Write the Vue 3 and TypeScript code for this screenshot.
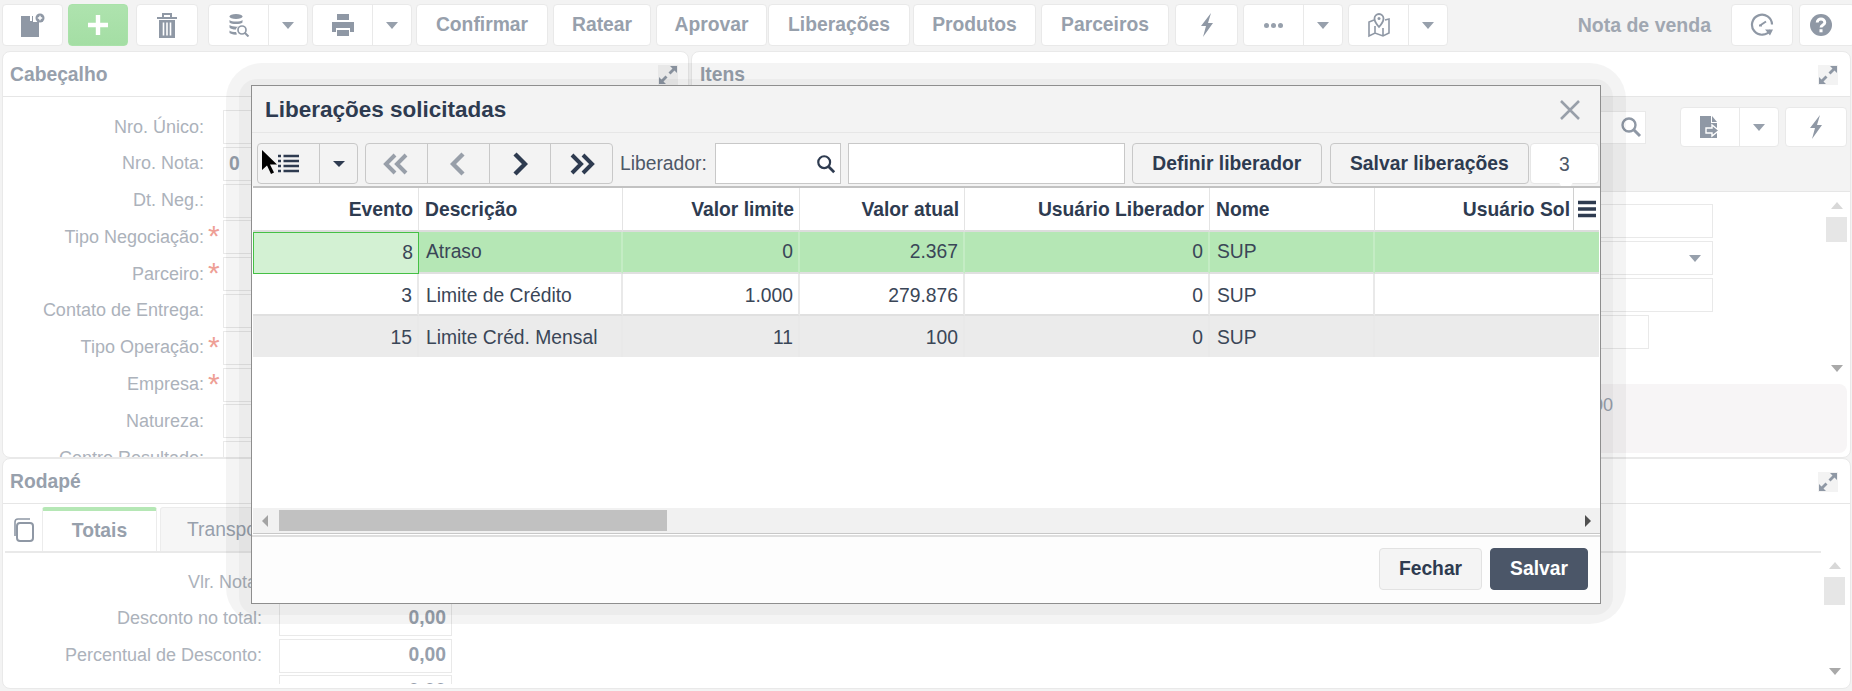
<script setup lang="ts">
interface TopBtn { label: string; cls: string }
const textButtons: TopBtn[] = [
  { label: 'Confirmar', cls: 'w-confirmar' },
  { label: 'Ratear', cls: 'w-ratear' },
  { label: 'Aprovar', cls: 'w-aprovar' },
  { label: 'Liberações', cls: 'w-liberacoes' },
  { label: 'Produtos', cls: 'w-produtos' },
  { label: 'Parceiros', cls: 'w-parceiros' },
]
interface FormRow { label: string; req?: boolean; value?: string }
const headerRows: FormRow[] = [
  { label: 'Nro. Único:' },
  { label: 'Nro. Nota:', value: '0' },
  { label: 'Dt. Neg.:' },
  { label: 'Tipo Negociação:', req: true },
  { label: 'Parceiro:', req: true },
  { label: 'Contato de Entrega:' },
  { label: 'Tipo Operação:', req: true },
  { label: 'Empresa:', req: true },
  { label: 'Natureza:' },
  { label: 'Centro Resultado:' },
]
const footerRows: FormRow[] = [
  { label: 'Vlr. Nota:', value: '0,00' },
  { label: 'Desconto no total:', value: '0,00' },
  { label: 'Percentual de Desconto:', value: '0,00' },
  { label: '', value: '0,00' },
]
const columns = [
  { title: 'Evento', num: true },
  { title: 'Descrição', num: false },
  { title: 'Valor limite', num: true },
  { title: 'Valor atual', num: true },
  { title: 'Usuário Liberador', num: true },
  { title: 'Nome', num: false },
  { title: 'Usuário Sol', num: true },
]
const rows = [
  { cells: ['8', 'Atraso', '0', '2.367', '0', 'SUP', ''], cls: 'sel' },
  { cells: ['3', 'Limite de Crédito', '1.000', '279.876', '0', 'SUP', ''], cls: 'plain' },
  { cells: ['15', 'Limite Créd. Mensal', '11', '100', '0', 'SUP', ''], cls: 'alt' },
]
</script>

<template>
  <div class="page">
    <header class="toolbar">
      <button class="btn w-new">
        <svg width="26" height="26" viewBox="0 0 26 26"><path d="M1 4h9v5h2V4h1v6H19v15H1z" fill="#8f98a5"/><circle cx="20" cy="6" r="4.500" fill="#8f98a5"/><path d="M17.800 6h4.400M20 3.800v4.400" stroke="#fff" stroke-width="1.400"/></svg>
      </button>
      <button class="btn w-plus green">
        <svg width="26" height="26" viewBox="0 0 26 26"><path d="M13 3v20M3 13h20" stroke="#fff" stroke-width="4.400"/></svg>
      </button>
      <button class="btn w-trash">
        <svg width="20" height="25" viewBox="0 0 20 25"><path d="M0 5h20M6 4V1h8v3" fill="none" stroke="#8f98a5" stroke-width="2"/><path d="M2 7h16v18H2z" fill="#8f98a5"/><path d="M6.500 9.500v13M10 9.500v13M13.500 9.500v13" stroke="#fff" stroke-width="1.600"/></svg>
      </button>
      <div class="split w-group ml-trash">
        <button class="part main">
          <svg width="22" height="24" viewBox="0 0 22 24"><ellipse cx="8" cy="3.500" rx="6.500" ry="2.500" fill="#8f98a5"/><path d="M1.500 7c2 2 11 2 13 0v2.500c-2 2-11 2-13 0zM1.500 12c2 1.500 7 2 9 1.500-2 1-2.500 2-2.500 3-3 0-5.500-.5-6.500-2zM1.500 17.500c1 1 4 1.500 6.500 1.500l1 2.500c-3 .5-6.500-.5-7.500-1.500z" fill="#8f98a5"/><circle cx="14" cy="17" r="4" fill="none" stroke="#8f98a5" stroke-width="1.700"/><path d="M17 20l3.500 3.500" stroke="#8f98a5" stroke-width="2"/></svg>
        </button>
        <button class="part drop"><i class="caret"></i></button>
      </div>
      <div class="split w-group">
        <button class="part main">
          <svg width="26" height="26" viewBox="0 0 26 26"><path d="M7 2h12v6H7zM2 10h22v10h-4v-4H6v4H2zM7 18h12v6H7z" fill="#8f98a5"/></svg>
        </button>
        <button class="part drop"><i class="caret"></i></button>
      </div>
      <button v-for="b in textButtons" :key="b.label" class="btn text" :class="b.cls">{{ b.label }}</button>
      <button class="btn w-bolt">
        <svg width="16" height="26" viewBox="0 0 16 26"><path d="M12 1 2 14h5l-3 11 10-14H9z" fill="#8f98a5"/></svg>
      </button>
      <div class="split w-group ml-dots">
        <button class="part main"><span class="dots"><b></b><b></b><b></b></span></button>
        <button class="part drop"><i class="caret"></i></button>
      </div>
      <div class="split w-group ml-map">
        <button class="part main">
          <svg width="24" height="26" viewBox="0 0 24 26"><path d="M7 8 2 10v14l6-3 8 3 6-3V7l-4 1M8 14v7M16 16v8" fill="none" stroke="#8f98a5" stroke-width="1.600"/><path d="M12 2a4.500 4.500 0 0 1 4.500 4.500C16.500 10 12 15 12 15S7.500 10 7.500 6.500A4.500 4.500 0 0 1 12 2z" fill="none" stroke="#8f98a5" stroke-width="1.800"/><circle cx="12" cy="6.500" r="1.500" fill="#8f98a5"/></svg>
        </button>
        <button class="part drop"><i class="caret"></i></button>
      </div>
      <span class="doc-title">Nota de venda</span>
      <button class="btn w-hist">
        <svg width="24" height="24" viewBox="0 0 24 24"><path d="M20.500 17A10 10 0 1 1 22 11.500" fill="none" stroke="#8f98a5" stroke-width="2.200"/><path d="M10 12.500l6-4M9 12.500h3" stroke="#8f98a5" stroke-width="2"/><path d="M15 16.500h8l-3 6z" fill="#8f98a5"/></svg>
      </button>
      <button class="btn w-help">
        <svg width="22" height="22" viewBox="0 0 26 26"><circle cx="13" cy="13" r="13" fill="#8f98a5"/><path d="M8.500 10c0-5.500 9-5.500 9 0 0 3-4.500 3-4.500 6" fill="none" stroke="#fff" stroke-width="3.400"/><rect x="11.200" y="18" width="3.600" height="3.600" fill="#fff"/></svg>
      </button>
    </header>

    <div class="top-panels">
      <section class="panel cab">
        <div class="panel-head">
          <h2>Cabeçalho</h2>
          <svg class="expand" width="20" height="20" viewBox="0 0 20 20"><path d="M19 1v7l-2.500-2.500-4 4-2-2 4-4L12 1zM1 19v-7l2.500 2.500 4-4 2 2-4 4L8 19z" fill="#8f98a5"/></svg>
        </div>
        <div class="form cab-form">
          <div v-for="r in headerRows" :key="r.label" class="f-row">
            <label>{{ r.label }}</label>
            <span class="star">{{ r.req ? '*' : '' }}</span>
            <span class="f-input"><b>{{ r.value }}</b></span>
          </div>
        </div>
      </section>
      <section class="panel itens">
        <div class="panel-head">
          <h2>Itens</h2>
          <svg class="expand" width="20" height="20" viewBox="0 0 20 20"><path d="M19 1v7l-2.500-2.500-4 4-2-2 4-4L12 1zM1 19v-7l2.500 2.500 4-4 2 2-4 4L8 19z" fill="#8f98a5"/></svg>
        </div>
        <div class="itens-tools">
          <span class="search-box">
            <svg width="22" height="22" viewBox="0 0 22 22"><circle cx="9" cy="9" r="6.500" fill="none" stroke="#8f98a5" stroke-width="2.400"/><path d="M14 14l6 6" stroke="#8f98a5" stroke-width="3"/></svg>
          </span>
          <div class="split w-mini">
            <button class="part main">
              <svg width="20" height="22" viewBox="0 0 20 22"><path d="M0 0h11v7h6v15H0z" fill="#8f98a5"/><path d="M12 0l5 6h-5z" fill="#8f98a5"/><path d="M6 12h6V9l7 5.500-7 5.500v-3H6z" fill="#8f98a5" stroke="#fff" stroke-width="1.400"/></svg>
            </button>
            <button class="part drop"><i class="caret"></i></button>
          </div>
          <button class="btn w-bolt2">
            <svg width="16" height="26" viewBox="0 0 16 26"><path d="M12 1 2 14h5l-3 11 10-14H9z" fill="#8f98a5"/></svg>
          </button>
        </div>
        <div class="itens-body">
          <div class="itens-fields">
            <span class="i-field"></span>
            <span class="i-field with-caret"><i class="caret"></i></span>
            <span class="i-field"></span>
            <span class="i-field short"></span>
          </div>
          <div class="vscroll v-itens">
            <i class="arrow-up"></i><span class="v-thumb t-itens"></span><span class="v-fill"></span><i class="arrow-down"></i>
          </div>
        </div>
        <div class="totals-box"><span>0,00</span></div>
      </section>
    </div>

    <section class="panel rod">
      <div class="panel-head">
        <h2>Rodapé</h2>
        <svg class="expand" width="20" height="20" viewBox="0 0 20 20"><path d="M19 1v7l-2.500-2.500-4 4-2-2 4-4L12 1zM1 19v-7l2.500 2.500 4-4 2 2-4 4L8 19z" fill="#8f98a5"/></svg>
      </div>
      <div class="tabs">
        <svg class="copy" width="24" height="26" viewBox="0 0 24 26"><path d="M4 19V5a3 3 0 0 1 3-3h12" fill="none" stroke="#8f98a5" stroke-width="1.600"/><rect x="6" y="6" width="16" height="18" rx="3" fill="none" stroke="#8f98a5" stroke-width="2"/></svg>
        <div class="tab active">Totais</div>
        <div class="tab second">Transporte</div>
      </div>
      <div class="rod-body">
        <div class="form rod-form">
          <div v-for="(r, i) in footerRows" :key="i" class="f-row wide">
            <label>{{ r.label }}</label>
            <span class="f-input money"><b>{{ r.value }}</b></span>
          </div>
        </div>
        <div class="vscroll v-rod">
          <i class="arrow-up"></i><span class="v-thumb t-rod"></span><span class="v-fill"></span><i class="arrow-down"></i>
        </div>
      </div>
    </section>

    <div class="modal-wrap">
      <div class="modal">
        <div class="m-head">
          <span class="m-title">Liberações solicitadas</span>
          <svg width="22" height="22" viewBox="0 0 22 22"><path d="M2 2l18 18M20 2 2 20" stroke="#989fa9" stroke-width="2.500"/></svg>
        </div>
        <div class="m-tools">
          <div class="msplit w-list">
            <button class="mpart list">
              <svg width="21" height="19" viewBox="0 0 21 19"><path d="M0 2h3M5.500 2H21M0 7h3M5.500 7H21M0 12h3M5.500 12H21M0 17h3M5.500 17H21" stroke="#2e3b50" stroke-width="2.600"/></svg>
            </button>
            <button class="mpart mdrop"><i class="caret dark"></i></button>
          </div>
          <div class="msplit w-nav">
            <button class="mpart nav">
              <svg width="26" height="22" viewBox="0 0 26 22"><path d="M12 2 3 11l9 9M23 2l-9 9 9 9" fill="none" stroke="#989fa9" stroke-width="4"/></svg>
            </button>
            <button class="mpart nav">
              <svg width="16" height="24" viewBox="0 0 16 24"><path d="M13 2 3 12l10 10" fill="none" stroke="#989fa9" stroke-width="4.400"/></svg>
            </button>
            <button class="mpart nav">
              <svg width="16" height="24" viewBox="0 0 16 24"><path d="M3 2l10 10L3 22" fill="none" stroke="#2e3b50" stroke-width="4.400"/></svg>
            </button>
            <button class="mpart nav">
              <svg width="26" height="22" viewBox="0 0 26 22"><path d="M3 2l9 9-9 9M14 2l9 9-9 9" fill="none" stroke="#2e3b50" stroke-width="4"/></svg>
            </button>
          </div>
          <span class="lib-label">Liberador:</span>
          <span class="m-input w-lib">
            <svg width="20" height="20" viewBox="0 0 22 22"><circle cx="9" cy="9" r="6.500" fill="none" stroke="#2e3b50" stroke-width="2.400"/><path d="M14 14l6 6" stroke="#2e3b50" stroke-width="3"/></svg>
          </span>
          <span class="m-input w-libname"></span>
          <button class="m-btn w-definir">Definir liberador</button>
          <button class="m-btn w-salvar">Salvar liberações</button>
          <span class="count">3</span>
        </div>
        <div class="grid-wrap">
          <table class="grid">
            <colgroup>
              <col class="c1" /><col class="c2" /><col class="c3" /><col class="c4" /><col class="c5" /><col class="c6" /><col class="c7" />
            </colgroup>
            <thead>
              <tr>
                <th v-for="c in columns" :key="c.title" :class="{ num: c.num }">{{ c.title }}</th>
              </tr>
            </thead>
            <tbody>
              <tr v-for="r in rows" :key="r.cells[0]" :class="r.cls">
                <td v-for="(v, i) in r.cells" :key="i" :class="{ num: columns[i].num }">{{ v }}</td>
              </tr>
            </tbody>
          </table>
          <span class="col-menu">
            <svg width="18" height="18" viewBox="0 0 18 18"><path d="M0 2.500h18M0 9h18M0 15.500h18" stroke="#2e3b50" stroke-width="3.600"/></svg>
          </span>
        </div>
        <div class="hscroll">
          <i class="arrow-left"></i>
          <span class="h-thumb"></span>
          <span class="v-fill"></span>
          <i class="arrow-right"></i>
        </div>
        <div class="m-foot">
          <button class="f-btn fechar">Fechar</button>
          <button class="f-btn salvar">Salvar</button>
        </div>
      </div>
      <svg class="cursor" width="16" height="25" viewBox="0 0 16 25"><path d="M0 0v20l5-4.500L9 24l3-1.500-4-8h7z" fill="#000"/></svg>
    </div>
  </div>
</template>

<style>
html, body { margin: 0; background: #f3f3f3; }
</style>

<style scoped>
* { box-sizing: border-box; }
.page {
  position: relative;
  width: 1852px;
  height: 691px;
  overflow: hidden;
  background: #f3f3f3;
  font-family: "Liberation Sans", Arial, sans-serif;
  color: #97a0ac;
}
button { font-family: inherit; padding: 0; }

/* top toolbar */
.toolbar { display: flex; align-items: stretch; height: 51px; padding: 4px 0 5px 2px; gap: 5px; }
.btn {
  display: flex; align-items: center; justify-content: center;
  background: #fff; border: 1px solid #e9e9e9; border-radius: 4px;
}
.btn.text { font-size: 19.3px; font-weight: 700; color: #97a0ac; }
.green { background: linear-gradient(#aee3ae, #a4dea4); border-color: #a9e2a9; }
.w-new { width: 61px; }
.w-plus { width: 60px; }
.w-trash { width: 62px; margin-left: 3px; }
.split { display: flex; background: #fff; border: 1px solid #e9e9e9; border-radius: 4px; }
.w-group { width: 100px; margin-left: -1px; }
.ml-trash { margin-left: 5px; }
.ml-dots { margin-left: 0; }
.ml-map { margin-left: 0; }
.part { background: none; border: 0; display: flex; align-items: center; justify-content: center; }
.part.main { flex: 1; border-right: 1px solid #e9e9e9; }
.part.drop { width: 38px; }
.caret { display: block; width: 0; height: 0; border-left: 6px solid transparent; border-right: 6px solid transparent; border-top: 7px solid #97a0ac; }
.caret.dark { border-top-color: #2e3b50; border-left-width: 6px; border-right-width: 6px; border-top-width: 6px; }
.w-confirmar { width: 132px; margin-left: -1px; }
.w-ratear { width: 98px; }
.w-aprovar { width: 111px; }
.w-liberacoes { width: 142px; margin-left: -4px; }
.w-produtos { width: 123px; margin-left: -2px; }
.w-parceiros { width: 128px; }
.w-bolt { width: 63px; margin-left: 1px; }
.w-hist { width: 62px; }
.w-help { width: 56px; margin-left: 1px; margin-right: -3px; padding-right: 12px; }
.dots { display: flex; gap: 2px; }
.dots b { width: 5px; height: 5px; border-radius: 50%; background: #97a0ac; }
.doc-title { margin-left: auto; margin-right: 15px; align-self: center; font-size: 19.5px; font-weight: 700; color: #a0a7b1; }

/* panels */
.top-panels { display: grid; grid-template-columns: 687px 1160px; column-gap: 2px; height: 407px; margin-left: 2px; }
.panel { background: #fff; border: 1px solid #e9e9e9; border-radius: 8px; overflow: hidden; position: relative; }
.panel-head { display: flex; align-items: center; justify-content: space-between; height: 45px; padding: 1px 12px 0 7px; border-bottom: 1px solid #e6e6e6; }
.panel-head h2 { margin: 0; font-size: 19.3px; font-weight: 700; color: #97a0ac; }
.cab .panel-head { padding-right: 10px; }
.expand { background: #f3f3f3; }
.itens .panel-head { padding-left: 8px; }
.form { font-size: 18px; }
.cab-form { padding-top: 13px; height: 361px; overflow: hidden; }
.f-row { display: grid; grid-template-columns: 201px 19px 300px; align-items: center; height: 34px; margin-bottom: 2.8px; }
.f-row label { text-align: right; color: #acb2bb; white-space: nowrap; }
.star { color: #ee9f96; font-size: 30px; font-weight: 400; line-height: 28px; padding: 0 0 0 4px; height: 24px; align-self: start; margin-top: 2px; }
.f-input { height: 34px; border: 1px solid #e9e9e9; padding: 0 5px; display: flex; align-items: center; }
.f-input b { font-size: 19.3px; color: #97a0ac; }
.f-row.wide { grid-template-columns: 259px 173px; column-gap: 17px; }
.money { justify-content: flex-end; }
.money b { margin-bottom: 2px; }

.itens-tools { display: flex; align-items: center; justify-content: flex-end; height: 95px; gap: 6px; background: #f3f3f3; border-bottom: 1px solid #e6e6e6; padding: 10px 3px 44px 0; }
.search-box { width: 200px; height: 33px; background: #fff; border: 1px solid #e9e9e9; margin-right: 28px; display: flex; align-items: center; justify-content: flex-end; padding-right: 3px; }
.w-mini { width: 99px; height: 40px; }
.w-mini .part.drop { width: 38px; }
.w-bolt2 { width: 62px; height: 40px; }
.itens-body { display: flex; height: 192px; }
.itens-fields { flex: 1; padding: 12px 113px 0 0; display: flex; flex-direction: column; align-items: flex-end; gap: 3px; }
.i-field { width: 400px; height: 34px; flex: none; border: 1px solid #e9e9e9; display: flex; align-items: center; justify-content: flex-end; padding-right: 11px; }
.i-field.short { width: 336px; margin-right: 64px; }
.vscroll { width: 21px; display: flex; flex-direction: column; align-items: center; }
.v-itens { margin-right: 3px; padding-top: 10px; height: 180px; }
.arrow-up { width: 0; height: 0; border-left: 6px solid transparent; border-right: 6px solid transparent; border-bottom: 7px solid #d8d8d8; flex: none; }
.arrow-down { width: 0; height: 0; border-left: 6px solid transparent; border-right: 6px solid transparent; border-top: 7px solid #a9a9a9; flex: none; }
.v-thumb { width: 21px; background: #e6e6e6; flex: none; }
.t-itens { height: 25px; margin-top: 8px; }
.t-rod { height: 28px; margin-top: 8px; }
.v-fill { flex: 1; }
.totals-box { height: 69px; margin: 0 3px 0 400px; background: #f7f5f6; border-radius: 8px; font-size: 18px; color: #9aa3b0; padding: 11px 0 0 486px; }

.rod { height: 231px; margin: 0 0 0 2px; width: 1849px; }
.tabs { display: flex; align-items: flex-end; height: 49px; margin: 0 29px 0 2px; border-bottom: 2px solid #e9e9e9; padding-top: 3px; position: relative; }
.copy { margin: 0 7px 8px 6px; }
.tab { height: 44px; width: 115px; display: flex; align-items: center; justify-content: center; font-size: 19.3px; background: #f6f6f6; border: 1px solid #ececec; border-bottom: 0; color: #97a0ac; border-radius: 3px 3px 0 0; }
.tab.second { width: 180px; margin-left: 3px; justify-content: flex-start; padding-left: 26px; }
.tab.active { font-weight: 700; background: #fff; border-top: 4px solid #b5e7b5; }
.rod-body { display: flex; height: 132px; }
.rod-form { flex: 1; padding-top: 12px; overflow: hidden; height: 131px; }
.v-rod { margin-right: 5px; padding-top: 9px; height: 122px; }

/* modal */
.modal-wrap { position: absolute; left: 251px; top: 85px; width: 1350px; height: 519px; z-index: 5; }
.modal-wrap::before { content: ""; position: absolute; inset: -22px -25px -20px -25px; border-radius: 36px; background: rgba(0,0,0,.045); }
.modal-wrap::after { content: ""; position: absolute; inset: -6px -12px -11px -12px; border-radius: 18px; background: rgba(0,0,0,.03); }
.modal { position: relative; z-index: 1; height: 100%; display: flex; flex-direction: column; border: 1px solid #8e8e8e; background: #fff; color: #2e3b50; }
.m-head { display: flex; align-items: center; justify-content: space-between; height: 47px; padding: 1px 19px 0 13px; background: #f3f3f3; border-bottom: 1px solid #e6e6e6; flex: none; }
.m-title { font-size: 22.5px; font-weight: 700; }
.m-tools { display: flex; align-items: flex-start; height: 53px; padding: 10px 0 0 5px; background: #f3f3f3; flex: none; }
.msplit { display: flex; height: 41px; border: 1px solid #c8c8c8; border-radius: 4px; }
.mpart { background: none; border: 0; display: flex; align-items: center; justify-content: center; }
.mpart + .mpart { border-left: 1px solid #c8c8c8; }
.w-list { width: 101px; }
.mpart.list { flex: 1; }
.mpart.mdrop { width: 38px; }
.w-nav { width: 248px; margin-left: 7px; }
.mpart.nav { flex: 1; }
.lib-label { font-size: 19.3px; color: #4d5867; margin-left: 7px; line-height: 41px; }
.m-input { height: 41px; background: #fff; border: 1px solid #c8c8c8; display: flex; align-items: center; justify-content: flex-end; padding-right: 4px; }
.w-lib { width: 126px; margin-left: 8px; }
.w-libname { width: 277px; margin-left: 7px; }
.m-btn { height: 41px; background: #f3f3f3; border: 1px solid #c8c8c8; border-radius: 4px; font-size: 19.3px; font-weight: 700; color: #2e3b50; }
.w-definir { width: 190px; margin-left: 7px; }
.w-salvar { width: 199px; margin-left: 8px; }
.count { position: relative; width: 69px; height: 41px; margin-left: 1px; background: #fff; border: 1px solid #e6e6e6; border-radius: 4px; font-size: 19.3px; color: #4d5867; text-align: center; line-height: 41px; }
.count::after { content: ""; position: absolute; left: 42%; bottom: -4px; width: 14px; height: 6px; background: #fff; border-radius: 0 0 6px 6px; }
.grid-wrap { position: relative; flex: 1; margin-left: 1px; border-top: 2px solid #c2c2c2; background: #fff; overflow: hidden; }
.grid { width: 1346px; table-layout: fixed; border-collapse: separate; border-spacing: 0; font-size: 19.3px; }
.c1 { width: 166px; } .c2 { width: 204px; } .c3 { width: 177px; } .c4 { width: 165px; } .c5 { width: 245px; } .c6 { width: 165px; } .c7 { width: 224px; }
.grid th { height: 44px; font-size: 19.3px; font-weight: 700; text-align: left; padding: 1px 5px 0 6px; border-right: 1px solid #e4e4e4; border-bottom: 2px solid #dcdcdc; background: #fff; white-space: nowrap; overflow: hidden; }
.grid th:last-child { border-right: 0; padding-right: 29px; }
.grid td { height: 42px; padding: 0 5px 0 7px; border-right: 2px solid #e9e9e9; border-bottom: 2px solid #e0e0e0; white-space: nowrap; color: #3a4657; }
.grid td:last-child { border-right: 0; }
.grid .num { text-align: right; }
.grid tr.sel td { background: #b5e7b5; border-right-color: #c4ecc4; }
.grid tr.sel td:first-child { background: #d3f1d3; border: 1px solid #45c045; }
.grid tr.plain td { padding-top: 3px; }
.grid tr.alt td { background: #ebebeb; height: 41px; border-bottom: 0; padding-top: 3px; }
.col-menu { position: absolute; right: 1px; top: 0; width: 26px; height: 42px; background: #fff; border-left: 1px solid #d0d0d0; display: flex; align-items: center; justify-content: center; }
.hscroll { display: flex; align-items: center; height: 26px; margin: 0 0 0 1px; background: #f1f1f1; flex: none; padding: 0 9px 0 9px; border-bottom: 1px solid #c8c8c8; }
.arrow-left { width: 0; height: 0; border-top: 6px solid transparent; border-bottom: 6px solid transparent; border-right: 6px solid #a3a3a3; margin-right: 11px; }
.arrow-right { width: 0; height: 0; border-top: 6px solid transparent; border-bottom: 6px solid transparent; border-left: 6px solid #505050; }
.h-thumb { width: 388px; height: 21px; background: #c1c1c1; }
.m-foot { display: flex; justify-content: flex-end; gap: 8px; height: 68px; padding: 11px 12px 0 0; border-top: 2px solid #dedede; margin-top: 1px; flex: none; background: #fdfdfd; }
.f-btn { height: 42px; border-radius: 4px; font-size: 19.3px; font-weight: 700; }
.fechar { width: 103px; background: #f4f4f4; border: 1px solid #e2e2e2; color: #2e3b50; }
.salvar { width: 98px; background: #4b5668; border: 1px solid #4b5668; color: #fff; }
.cursor { position: absolute; left: 11px; top: 65px; z-index: 2; }
</style>
